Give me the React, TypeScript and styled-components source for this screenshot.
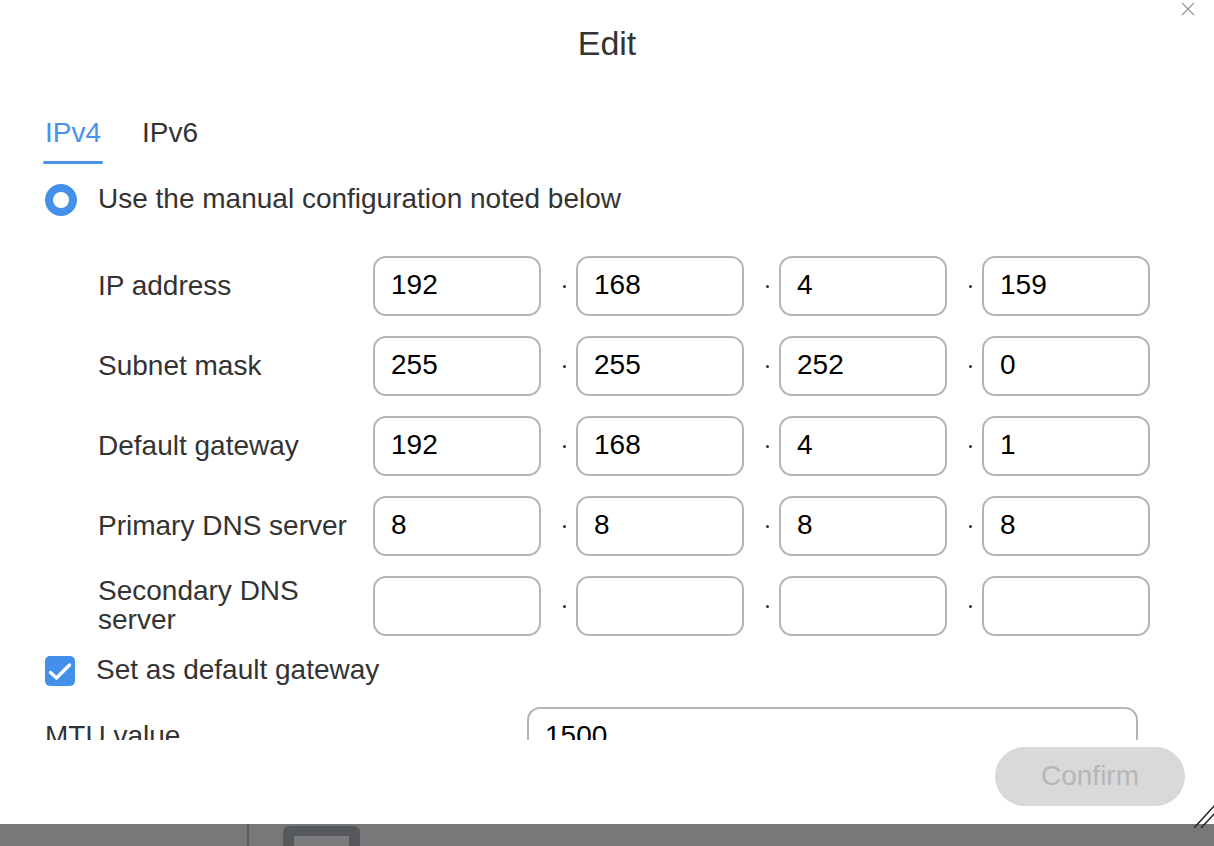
import React from "react";
import styled, { createGlobalStyle } from "styled-components";

const GlobalStyle = createGlobalStyle`
  html, body { margin: 0; padding: 0; background: #ffffff; }
  body {
    font-family: "Liberation Sans", Arial, Helvetica, sans-serif;
    color: #333333;
    -webkit-font-smoothing: antialiased;
  }
  * { box-sizing: border-box; }
`;

const Screen = styled.div`
  width: 1214px;
  height: 846px;
  display: flex;
  flex-direction: column;
  overflow: hidden;
  position: relative;
`;

const Dialog = styled.div`
  position: relative;
  height: 824px;
  background: #ffffff;
  display: flex;
  flex-direction: column;
`;

const CloseButton = styled.button`
  position: absolute;
  top: 2px;
  right: 19px;
  width: 14px;
  height: 14px;
  padding: 0;
  border: none;
  background: transparent;
  display: flex;
`;

const Title = styled.h1`
  margin: 0;
  padding-top: 23px;
  padding-bottom: 1px;
  font-size: 34px;
  line-height: 40px;
  font-weight: 400;
  text-align: center;
  color: #333333;
`;

const TabBar = styled.div`
  display: flex;
  gap: 37px;
  margin-top: 52px;
  padding-left: 43px;
`;

const Tab = styled.div<{ $active?: boolean }>`
  display: flex;
  flex-direction: column;
  padding: 0 2px;
  font-size: 28px;
  line-height: 34px;
  color: ${(p) => (p.$active ? "#4a91e8" : "#333333")};
  &::after {
    content: "";
    display: block;
    height: 3px;
    margin: 11px -2px 0;
    border-radius: 2px;
    background: ${(p) => (p.$active ? "#4a91e8" : "transparent")};
  }
`;

const Body = styled.div`
  height: 576px;
  overflow: hidden;
  padding: 0 45px;
`;

const ChoiceRow = styled.label<{ $top: number }>`
  display: flex;
  align-items: center;
  gap: 21px;
  height: 34px;
  margin-top: ${(p) => p.$top}px;
  font-size: 28px;
  line-height: 34px;
  color: #333333;
`;

const ChoiceText = styled.span`
  padding-bottom: 2px;
`;

const Radio = styled.span`
  width: 32px;
  height: 32px;
  border-radius: 50%;
  border: 8px solid #4390ea;
  background: #ffffff;
  flex: none;
`;

const Checkbox = styled.span`
  width: 30px;
  height: 30px;
  border-radius: 5px;
  background: #4390ea;
  display: flex;
  align-items: center;
  justify-content: center;
  flex: none;
`;

const Form = styled.div`
  display: flex;
  flex-direction: column;
  gap: 20px;
  margin-top: 39px;
  padding-left: 53px;
`;

const FieldRow = styled.div`
  display: flex;
  align-items: center;
`;

const FieldLabel = styled.div`
  width: 275px;
  padding: 0 12px 2px 0;
  font-size: 28px;
  line-height: 29px;
  color: #333333;
`;

const Octets = styled.div`
  display: flex;
  align-items: center;
`;

const TextBox = styled.input<{ $width: number }>`
  width: ${(p) => p.$width}px;
  height: 60px;
  border: 2px solid #b4b4b4;
  border-radius: 13px;
  padding: 0 0 2px 16px;
  font-family: "Liberation Sans", Arial, Helvetica, sans-serif;
  font-size: 28px;
  color: #000000;
  background: #ffffff;
  outline: none;
`;

const Separator = styled.span`
  width: 35px;
  display: flex;
  justify-content: flex-end;
  padding-right: 10px;
  &::before {
    content: "";
    width: 3px;
    height: 3px;
    border-radius: 50%;
    background: #333333;
  }
`;

const MtuRow = styled.div`
  display: flex;
  align-items: center;
  margin-top: 19px;
`;

const MtuLabel = styled.div`
  width: 482px;
  padding-bottom: 2px;
  font-size: 28px;
  line-height: 34px;
  color: #333333;
`;

const Footer = styled.div`
  height: 84px;
  display: flex;
  justify-content: flex-end;
  align-items: flex-start;
  padding: 7px 29px 0 0;
`;

const ConfirmButton = styled.button`
  width: 190px;
  height: 59px;
  border: none;
  border-radius: 30px;
  background: #d9d9d9;
  color: #b6b6b6;
  font-family: "Liberation Sans", Arial, Helvetica, sans-serif;
  font-size: 28px;
  padding: 0 0 2px;
`;

const ResizeGrip = styled.svg`
  position: absolute;
  right: 0;
  bottom: -4px;
`;

const Taskbar = styled.div`
  height: 22px;
  background: #787878;
  display: flex;
  align-items: flex-end;
`;

const TaskSegment = styled.div`
  width: 249px;
  height: 22px;
  border-right: 2px solid #5e5e5e;
`;

const AppButton = styled.div`
  width: 77px;
  height: 20px;
  margin-left: 34px;
  padding: 10px 11px 0;
  border-radius: 6px 6px 0 0;
  background: #55585c;
  &::before {
    content: "";
    display: block;
    height: 10px;
    background: #7b7b7b;
    border-radius: 1px 1px 0 0;
  }
`;

const fields: { label: string; values: string[] }[] = [
  { label: "IP address", values: ["192", "168", "4", "159"] },
  { label: "Subnet mask", values: ["255", "255", "252", "0"] },
  { label: "Default gateway", values: ["192", "168", "4", "1"] },
  { label: "Primary DNS server", values: ["8", "8", "8", "8"] },
  { label: "Secondary DNS server", values: ["", "", "", ""] },
];

export default function App() {
  return (
    <>
      <GlobalStyle />
      <Screen>
        <Dialog>
          <CloseButton aria-label="Close">
            <svg width="14" height="14" viewBox="0 0 14 14">
              <path d="M1 1 L13 13 M13 1 L1 13" stroke="#9a9a9a" strokeWidth="1.3" />
            </svg>
          </CloseButton>
          <Title>Edit</Title>
          <TabBar>
            <Tab $active>IPv4</Tab>
            <Tab>IPv6</Tab>
          </TabBar>
          <Body>
            <ChoiceRow $top={19}>
              <Radio />
              <ChoiceText>Use the manual configuration noted below</ChoiceText>
            </ChoiceRow>
            <Form>
              {fields.map((f) => (
                <FieldRow key={f.label}>
                  <FieldLabel>{f.label}</FieldLabel>
                  <Octets>
                    {f.values.map((v, i) => (
                      <React.Fragment key={i}>
                        {i > 0 && <Separator />}
                        <TextBox $width={168} defaultValue={v} />
                      </React.Fragment>
                    ))}
                  </Octets>
                </FieldRow>
              ))}
            </Form>
            <ChoiceRow $top={18}>
              <Checkbox>
                <svg width="24" height="19" viewBox="0 0 24 19">
                  <path d="M2.5 10.5 L8.5 16 L21.5 3" fill="none" stroke="#ffffff" strokeWidth="3.4" strokeLinecap="round" strokeLinejoin="round" />
                </svg>
              </Checkbox>
              <ChoiceText>Set as default gateway</ChoiceText>
            </ChoiceRow>
            <MtuRow>
              <MtuLabel>MTU value</MtuLabel>
              <TextBox $width={611} defaultValue="1500" />
            </MtuRow>
          </Body>
          <Footer>
            <ConfirmButton disabled>Confirm</ConfirmButton>
          </Footer>
          <ResizeGrip width="20" height="24" viewBox="0 0 20 24">
            <path d="M0 24 L21 1 M7 24 L21 9" stroke="#2a2a2a" strokeWidth="1.6" />
          </ResizeGrip>
        </Dialog>
        <Taskbar>
          <TaskSegment />
          <AppButton />
        </Taskbar>
      </Screen>
    </>
  );
}
